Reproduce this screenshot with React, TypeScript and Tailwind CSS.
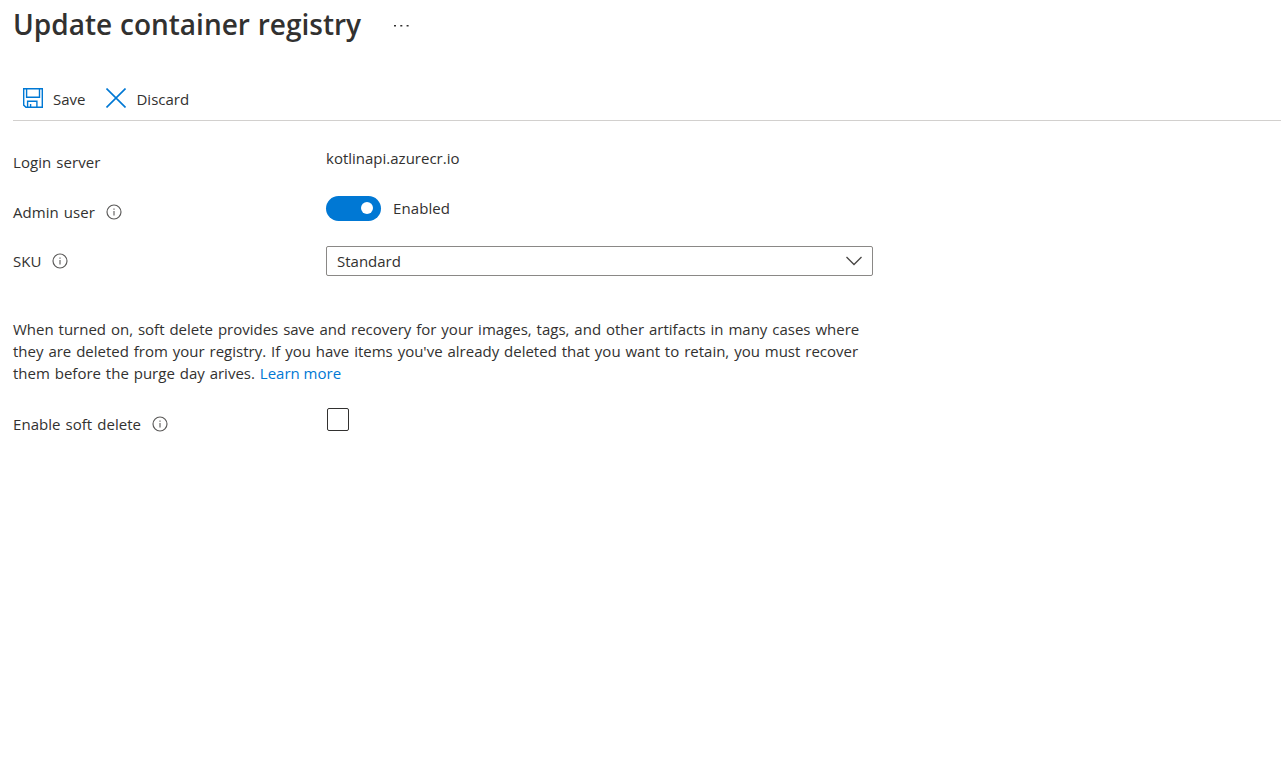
import type { ReactNode } from 'react';

function InfoIcon() {
  return (
    <svg width="16" height="16" viewBox="0 0 16 16" fill="none" stroke="#5a5958" className="shrink-0">
      <circle cx="8" cy="8" r="7" strokeWidth="1.15" />
      <path d="M8 7v4.5" strokeWidth="1.1" />
      <path d="M8 4.6v1.1" strokeWidth="1.1" />
    </svg>
  );
}

function SaveIcon() {
  return (
    <svg width="20" height="20" viewBox="0 0 20 20" fill="none" stroke="#0078d4" strokeWidth="1.4">
      <path d="M.7.7h18.6v18.6H2.9L.7 17.1z" />
      <path d="M3.6.7v8.5h12.9V.7" />
      <path d="M4.6 19.3v-6h9.3v6M7.6 19.3v-3.2" />
    </svg>
  );
}

function Row({ label, info, labelClass, children }: { label: string; info?: boolean; labelClass: string; children: ReactNode }) {
  return (
    <div className="flex h-[30px] items-center">
      <div className={`flex h-[22px] w-[313px] shrink-0 items-center gap-[11px] ${labelClass}`}>
        <span>{label}</span>
        {info && <InfoIcon />}
      </div>
      {children}
    </div>
  );
}

export default function App() {
  return (
    <main className="h-[782px] w-full overflow-hidden bg-white pl-[13px] font-['Open_Sans',sans-serif] text-[15px] leading-[22px] [word-spacing:1px] text-[#323130]">
      <header className="flex h-[47px] items-center">
        <h1 className="text-[28px] leading-[40px] font-semibold whitespace-nowrap [word-spacing:0.6px]">Update container registry</h1>
        <svg width="15" height="4" viewBox="0 0 15 4" fill="#323130" className="mt-[4px] ml-[33px]">
          <path d="M0 1h2v1.600H0zM6.300 1h2v1.600h-2zM12.600 1h2v1.600h-2z" />
        </svg>
      </header>
      <div className="mt-[29px] flex h-[45px] items-center border-b border-[#d2d0ce] pl-[10px]">
        <button className="flex items-center gap-[10px]">
          <SaveIcon />
          <span className="pt-[2px]">Save</span>
        </button>
        <button className="ml-[21px] flex items-center gap-[10px]">
          <svg width="20" height="20" viewBox="0 0 20 20" fill="none" stroke="#0078d4" strokeWidth="1.6">
            <path d="m.5.5 19 19M19.5.5l-19 19" />
          </svg>
          <span className="pt-[2px]">Discard</span>
        </button>
      </div>
      <section className="mt-[22px] flex flex-col gap-5">
        <Row label="Login server" info={false} labelClass="mt-[8px] tracking-[0.07px]">
          <span>kotlinapi.azurecr.io</span>
        </Row>
        <Row label="Admin user" info labelClass="mt-[8px] tracking-[0.07px]">
          <button role="switch" aria-checked="true" aria-label="Admin user" className="flex h-[25px] w-[55px] items-center justify-end rounded-full bg-[#0078d4] pr-[8px]">
            <span className="size-[12px] rounded-full bg-white" />
          </button>
          <span className="ml-3 tracking-[0.1px]">Enabled</span>
        </Row>
        <div className="mt-[3px]">
          <Row label="SKU" info labelClass="">
            <button className="flex h-[30px] w-[547px] items-center justify-between rounded-[2px] border border-[#8a8886] px-[10px]">
              <span>Standard</span>
              <svg width="16" height="10" viewBox="0 0 16 10" fill="none" stroke="#484644" strokeWidth="1.3">
                <path d="m.5 1 7.5 7.5L15.5 1" />
              </svg>
            </button>
          </Row>
        </div>
      </section>
      <p className="mt-[42px] whitespace-nowrap">
        When turned on, soft delete provides save and recovery for your images, tags, and other artifacts in many cases where<br />
        they are deleted from your registry. If you have items you've already deleted that you want to retain, you must recover<br />
        them before the purge day arives. <a className="text-[#0078d4] [word-spacing:0px]">Learn more</a>
      </p>
      <div className="mt-[20px]">
        <Row label="Enable soft delete" info labelClass="mt-[10px] tracking-[0.05px]">
          <button role="checkbox" aria-checked="false" aria-label="Enable soft delete" className="ml-[1px] h-[23px] w-[22px] rounded-[2px] border border-[#323130]" />
        </Row>
      </div>
    </main>
  );
}
